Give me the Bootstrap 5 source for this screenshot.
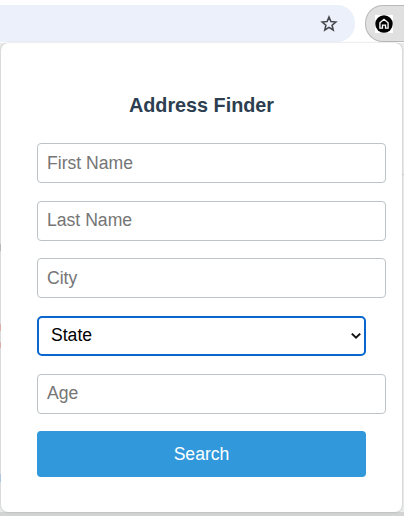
<!DOCTYPE html>
<html lang="en">
<head>
<meta charset="utf-8">
<meta name="viewport" content="width=device-width, initial-scale=1">
<title>Address Finder</title>
<link href="https://cdn.jsdelivr.net/npm/bootstrap@5.3.0/dist/css/bootstrap.min.css" rel="stylesheet">
<style>
body{width:404px;height:516px;font-family:"Liberation Sans",Arial,sans-serif;background:#fff}
.browser-bar{height:43px;padding-top:5px}
.omnibox{width:355px;height:37px;background:#ebf0fa;border-radius:0 18px 18px 0;padding-right:17px}
.extension-pill{width:39px;height:37px;margin-left:10px;background:#e0e0e0;border:1px solid #b9b9b9;border-right:0;border-radius:18px 0 0 18px;padding-left:9px}
.page-behind{height:473px;background:#e9eaea;padding:0 2px 4px 1px;background-image:linear-gradient(#f1b9b9,#f1b9b9),linear-gradient(#f1b9b9,#f1b9b9),linear-gradient(#bcd3ee,#bcd3ee),linear-gradient(#c6c8c8,#c6c8c8),linear-gradient(#d0d1d1,#d0d1d1),linear-gradient(#d2d3d3,#d2d3d3);background-size:2px 7px,2px 6px,2px 8px,2px 7px,3px 1px,100% 4px;background-position:0 281px,0 299px,0 431px,0 201px,100% 131px,0 100%;background-repeat:no-repeat}
.popup{height:469px;border:0;border-radius:7px;padding:52px 16px 0 36px;box-shadow:0 0 2px rgba(0,0,0,.25)}
.popup-title{font-size:19.8px;line-height:20px;font-weight:700;color:#2c3e50;width:329px;margin-bottom:28px}
.field{width:349px;height:40px;font-size:17.6px;padding:0 9px;border:1px solid #bdc3c7;border-radius:4px;color:#000;margin-bottom:17.5px}
.field::placeholder{color:#757575;opacity:1}
.state-field{width:329px;height:40px;margin-bottom:18px;border:2px solid #0866cc;border-radius:5px;padding:0 3px 0 12px;font-size:17.6px;color:#000;background:#fff}
.search-btn{width:329px;height:46px;font-size:17.6px;border-radius:4px;background:#3199db;border:0;color:#fff;padding:0}
.search-btn:hover{background:#2980b9;color:#fff}
</style>
</head>
<body class="overflow-hidden">
<header class="browser-bar d-flex">
  <div class="omnibox d-flex align-items-center justify-content-end">
    <svg width="18" height="18" viewBox="0 0 18 18" fill="none" stroke="#45484c" stroke-width="1.6" aria-hidden="true"><path d="M9 2.1 10.9 6.5 15.8 7 12.1 10.2 13.2 15 9 12.4 4.8 15 5.9 10.2 2.2 7 7.1 6.5Z"/></svg>
  </div>
  <div class="extension-pill d-flex align-items-center">
    <svg width="18" height="18" viewBox="0 0 19 19" aria-hidden="true"><path fill="#fff" d="M0 0h19v19H0z"/><circle cx="9.5" cy="9.5" r="9.2" fill="#000"/><path d="M5.2 8.2 9.5 4.6l4.3 3.6v5.6h-2.7v-3.2H7.9v3.2H5.2Z" fill="none" stroke="#fff" stroke-width="1.4"/></svg>
  </div>
</header>
<main class="page-behind">
  <form class="popup card">
    <h1 class="popup-title text-center">Address Finder</h1>
    <input class="field form-control" placeholder="First Name" aria-label="First Name">
    <input class="field form-control" placeholder="Last Name" aria-label="Last Name">
    <input class="field form-control" placeholder="City" aria-label="City">
    <button type="button" class="state-field d-flex align-items-center justify-content-between" aria-label="State">
      <span>State</span>
      <svg width="10" height="8" viewBox="0 0 10 8" fill="none" stroke="#111" stroke-width="2" aria-hidden="true"><path d="M.8 1.6 5 5.6l4.2-4"/></svg>
    </button>
    <input class="field form-control" placeholder="Age" aria-label="Age">
    <button type="button" class="search-btn btn">Search</button>
  </form>
</main>
<script src="https://cdn.jsdelivr.net/npm/bootstrap@5.3.0/dist/js/bootstrap.bundle.min.js"></script>
</body>
</html>
